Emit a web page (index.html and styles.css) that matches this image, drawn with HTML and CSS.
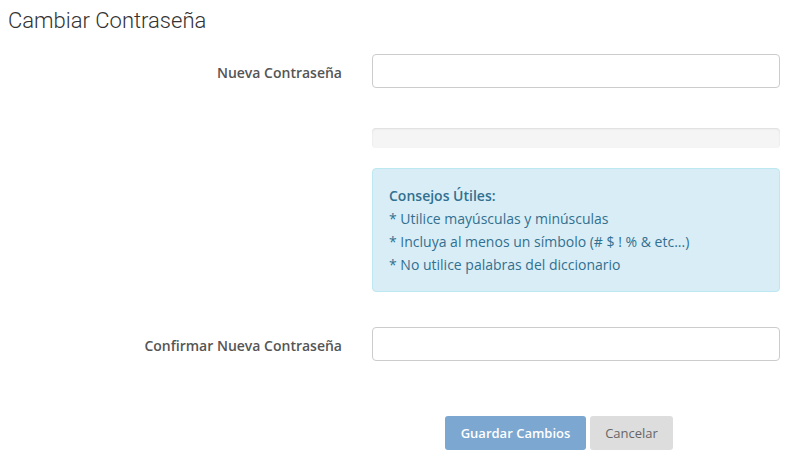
FILE: index.html
```html
<!DOCTYPE html>
<html lang="es">

<head>
    <meta charset="UTF-8">
    <meta name="viewport" content="width=device-width, initial-scale=1.0">
    <link rel="stylesheet" href="styles.css">
    <title>Cambiar Contraseña</title>
</head>

<body>
    <div class="page">
        <h3 class="page-title">Cambiar Contraseña</h3>

        <form class="password-form" onsubmit="return false">
            <div class="form-row">
                <label for="new-password">Nueva Contraseña</label>
                <input type="password" id="new-password" class="form-input">
            </div>

            <div class="form-row row-strength">
                <span></span>
                <div class="strength-bar"></div>
            </div>

            <div class="form-row row-tips">
                <span></span>
                <div class="tips">
                    <strong>Consejos Útiles:</strong><br>
                    * Utilice mayúsculas y minúsculas<br>
                    * Incluya al menos un símbolo (# $ ! % &amp; etc...)<br>
                    * No utilice palabras del diccionario
                </div>
            </div>

            <div class="form-row row-confirm">
                <label for="confirm-password">Confirmar Nueva Contraseña</label>
                <input type="password" id="confirm-password" class="form-input">
            </div>

            <div class="form-row row-actions">
                <span></span>
                <div class="actions">
                    <button type="submit" class="btn btn-save" disabled>Guardar Cambios</button>
                    <button type="button" class="btn btn-cancel">Cancelar</button>
                </div>
            </div>
        </form>
    </div>
</body>

</html>
```

FILE: styles.css
```css
body {
    margin: 0;
    font-family: "Open Sans", Arial, sans-serif;
    font-size: 14px;
    color: #333;
    background: #fff;
}

.page {
    padding: 0 17px 0 8px;
}

.page-title {
    font-family: Roboto, Arial, sans-serif;
    font-weight: 300;
    font-size: 22px;
    line-height: 26px;
    color: #333;
    margin: 8px 0 20px;
}

.form-row {
    display: grid;
    grid-template-columns: 334px 408px;
    column-gap: 30px;
    align-items: center;
}

.form-row label {
    text-align: right;
    font-weight: 600;
    color: #555;
    padding-top: 3px;
}

.form-input {
    box-sizing: border-box;
    height: 34px;
    border: 1px solid #ccc;
    border-radius: 4px;
    background: #fff;
    padding: 6px 12px;
    font-size: 14px;
}

.row-strength {
    margin-top: 40px;
}

.strength-bar {
    height: 20px;
    background-color: #f5f5f5;
    border-radius: 4px;
    box-shadow: inset 0 1px 2px rgba(0, 0, 0, 0.1);
}

.row-tips {
    margin-top: 20px;
}

.tips {
    background-color: #d9edf7;
    border: 1px solid #bce8f1;
    border-radius: 4px;
    color: #31708f;
    padding: 15px 16px;
    line-height: 23px;
}

.tips strong {
    font-weight: 600;
}

.row-confirm {
    margin-top: 35px;
}

.row-actions {
    margin-top: 55px;
}

.actions {
    display: flex;
    gap: 4px;
    padding-left: 73px;
}

.btn {
    height: 34px;
    padding: 0;
    border: none;
    border-radius: 3px;
    font-family: "Open Sans", Arial, sans-serif;
    font-size: 13px;
    white-space: nowrap;
    cursor: pointer;
}

.btn-save {
    background-color: #7ba7d0;
    color: #fff;
    font-weight: 600;
    width: 141px;
}

.btn-cancel {
    background-color: #dddddd;
    color: #666;
    width: 83px;
}
```
